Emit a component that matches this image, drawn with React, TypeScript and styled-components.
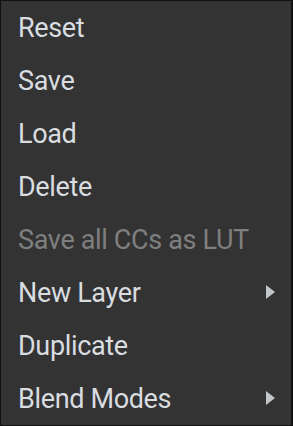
import styled, { createGlobalStyle } from "styled-components";

const GlobalStyle = createGlobalStyle`
  html, body {
    margin: 0;
    padding: 0;
    background: #333333;
  }
`;

type Item = { label: string; disabled?: boolean; submenu?: boolean };

const items: Item[] = [
  { label: "Reset" },
  { label: "Save" },
  { label: "Load" },
  { label: "Delete" },
  { label: "Save all CCs as LUT", disabled: true },
  { label: "New Layer", submenu: true },
  { label: "Duplicate" },
  { label: "Blend Modes", submenu: true },
];

const ContextMenu: React.FC = () => {
  return (
    <Menu>
      {items.map((item) => (
        <Row key={item.label} $disabled={item.disabled}>
          <Label>{item.label}</Label>
          {item.submenu && (
            <Arrow viewBox="0 0 9 14">
              <path d="M0 0 L9 7 L0 14 Z" />
            </Arrow>
          )}
        </Row>
      ))}
    </Menu>
  );
};

const App: React.FC = () => (
  <>
    <GlobalStyle />
    <ContextMenu />
  </>
);

const Menu = styled.div`
  box-sizing: border-box;
  width: 293px;
  height: 426px;
  background: #333333;
  border: 1px solid #111111;
  border-right-width: 2px;
  padding-top: 0;
  display: flex;
  flex-direction: column;
  font-family: Roboto, "Noto Sans", sans-serif;
`;

const Row = styled.div<{ $disabled?: boolean }>`
  height: 53px;
  flex-shrink: 0;
  display: flex;
  align-items: center;
  justify-content: space-between;
  padding: 0 16px 0 17px;
  font-size: 27px;
  letter-spacing: -0.35px;
  color: ${(p) => (p.$disabled ? "#7f7f7f" : "#d9dde0")};
`;

const Label = styled.span`
  white-space: nowrap;
`;

const Arrow = styled.svg`
  width: 9px;
  height: 14px;
  fill: #c3c6ca;
  margin-top: -2px;
`;

export default App;
